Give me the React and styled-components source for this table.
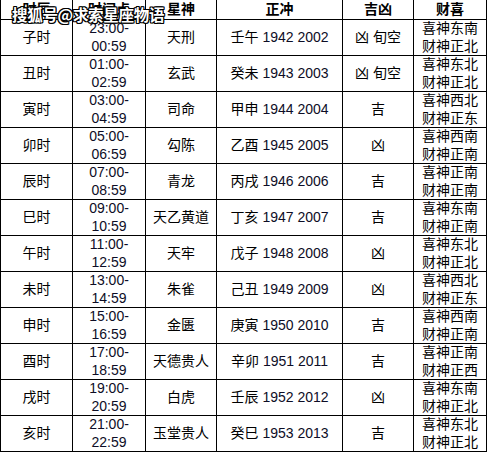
import React from "react";
import styled, { createGlobalStyle } from "styled-components";

const GlobalStyle = createGlobalStyle`
  html, body {
    margin: 0;
    padding: 0;
    background: #fff;
  }
  body {
    font-family: "Liberation Sans", "Noto Sans CJK SC", sans-serif;
    color: #000;
  }
`;

const rows = [
  ["子时", "23:00-", "00:59", "天刑", "壬午", "1942 2002", "凶 旬空", "喜神东南", "财神正北"],
  ["丑时", "01:00-", "02:59", "玄武", "癸未", "1943 2003", "凶 旬空", "喜神东北", "财神正北"],
  ["寅时", "03:00-", "04:59", "司命", "甲申", "1944 2004", "吉", "喜神西北", "财神正东"],
  ["卯时", "05:00-", "06:59", "勾陈", "乙酉", "1945 2005", "凶", "喜神西南", "财神正南"],
  ["辰时", "07:00-", "08:59", "青龙", "丙戌", "1946 2006", "吉", "喜神正南", "财神正南"],
  ["巳时", "09:00-", "10:59", "天乙黄道", "丁亥", "1947 2007", "吉", "喜神东南", "财神正南"],
  ["午时", "11:00-", "12:59", "天牢", "戊子", "1948 2008", "凶", "喜神东北", "财神正北"],
  ["未时", "13:00-", "14:59", "朱雀", "己丑", "1949 2009", "凶", "喜神西北", "财神正东"],
  ["申时", "15:00-", "16:59", "金匮", "庚寅", "1950 2010", "吉", "喜神西南", "财神正南"],
  ["酉时", "17:00-", "18:59", "天德贵人", "辛卯", "1951 2011", "吉", "喜神正南", "财神正西"],
  ["戌时", "19:00-", "20:59", "白虎", "壬辰", "1952 2012", "凶", "喜神东南", "财神正北"],
  ["亥时", "21:00-", "22:59", "玉堂贵人", "癸巳", "1953 2013", "吉", "喜神东北", "财神正北"],
];

const headers = ["时辰", "时间点", "星神", "正冲", "吉凶", "财喜"];

const Page = styled.div`
  position: relative;
  width: 487px;
  height: 452px;
  overflow: hidden;
`;

const Grid = styled.div`
  display: grid;
  grid-template-columns: 71px 72px 70px 125px 70px 72px;
  grid-template-rows: 19px repeat(12, 35px);
  gap: 1px;
  padding: 0 1px 1px 1px;
  background: #000;
  width: 487px;
  box-sizing: border-box;
`;

const Cell = styled.div`
  background: #fff;
  display: flex;
  flex-direction: column;
  align-items: center;
  justify-content: center;
  font-size: 14px;
  line-height: 17.5px;
  white-space: nowrap;
  overflow: visible;
`;

const HeadCell = styled(Cell)`
  font-weight: bold;
  font-size: 14px;
  line-height: 19px;
`;

const Year = styled.span`
  margin-left: 4px;
  color: #0d0d26;
`;

const Time = styled.span`
  color: #0d0d26;
`;

const Watermark = styled.div`
  position: absolute;
  top: 5px;
  left: 12px;
  font-size: 15.5px;
  line-height: 18px;
  font-weight: bold;
  color: #fff;
  letter-spacing: -0.3px;
  font-family: "Noto Sans CJK SC", sans-serif;
  text-shadow:
    1px 0 0 #000, -1px 0 0 #000, 0 1px 0 #000, 0 -1px 0 #000,
    1px 1px 0 #000, -1px -1px 0 #000, 1px -1px 0 #000, -1px 1px 0 #000;
`;

export default function App() {
  return (
    <>
      <GlobalStyle />
      <Page>
        <Grid>
          {headers.map((h) => (
            <HeadCell key={h}>{h}</HeadCell>
          ))}
          {rows.map((r) => (
            <React.Fragment key={r[0]}>
              <Cell>{r[0]}</Cell>
              <Cell>
                <Time>{r[1]}</Time>
                <Time>{r[2]}</Time>
              </Cell>
              <Cell>{r[3]}</Cell>
              <Cell style={{ flexDirection: "row" }}>
                {r[4]}
                <Year>{r[5]}</Year>
              </Cell>
              <Cell>{r[6]}</Cell>
              <Cell>
                <span>{r[7]}</span>
                <span>{r[8]}</span>
              </Cell>
            </React.Fragment>
          ))}
        </Grid>
        <Watermark>搜狐号@求索星座物语</Watermark>
      </Page>
    </>
  );
}
